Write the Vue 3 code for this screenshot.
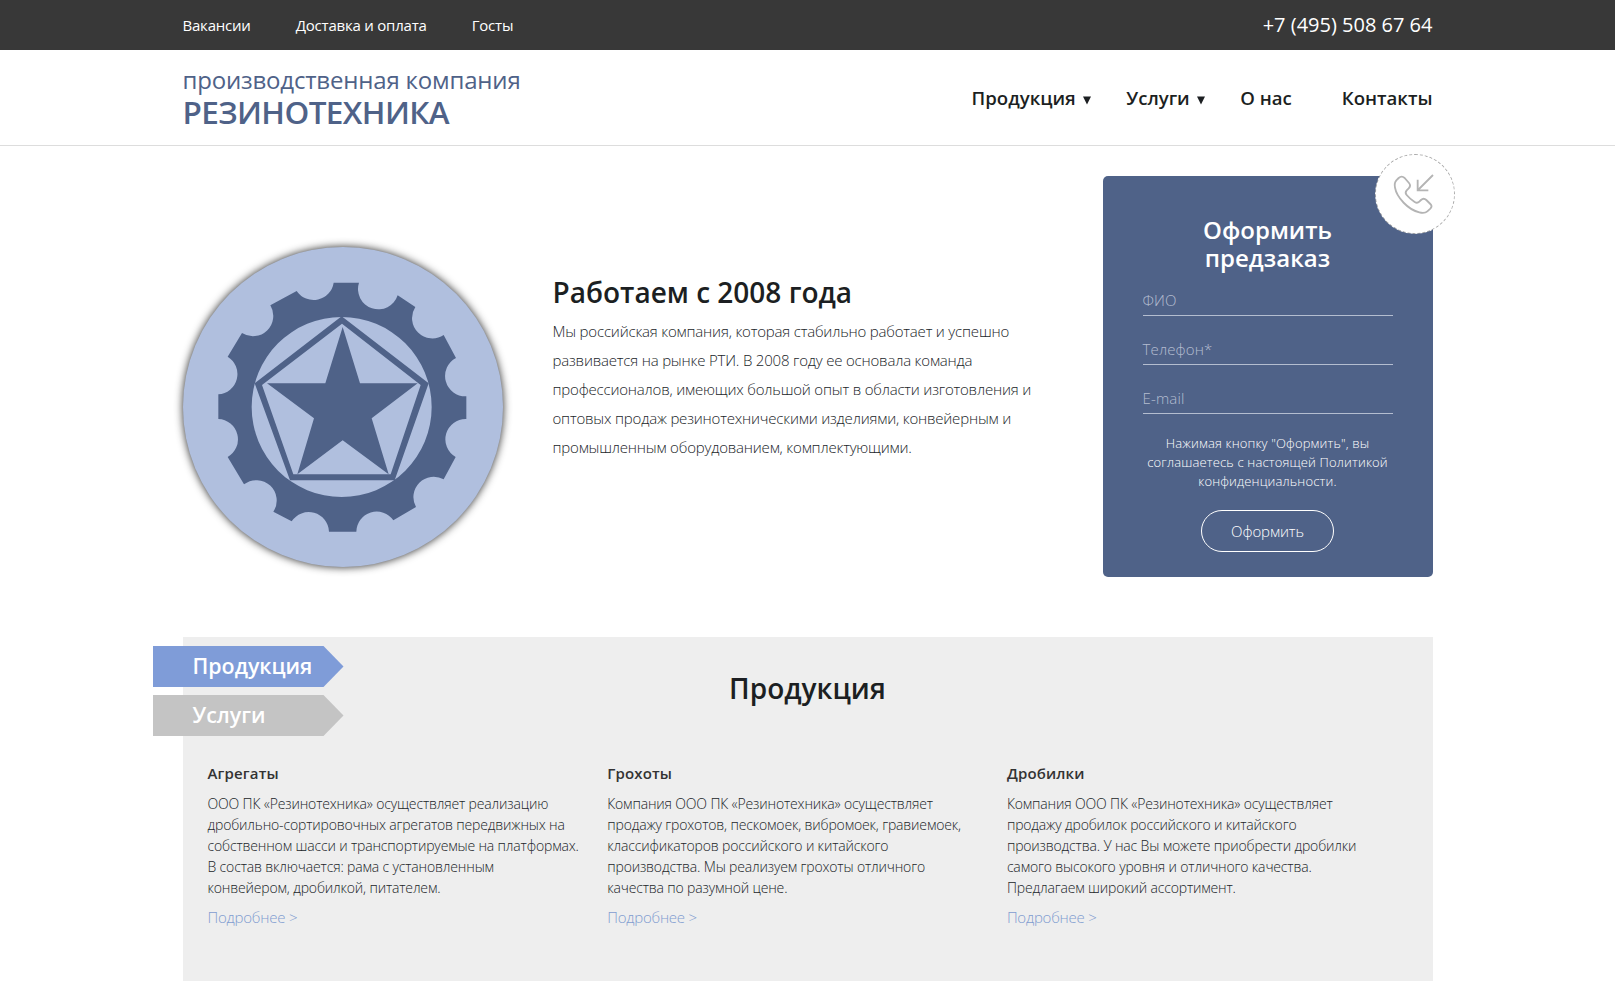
<script setup>
const topLinks = ['Вакансии', 'Доставка и оплата', 'Госты']
const about = [
  'Мы российская компания, которая стабильно работает и успешно',
  'развивается на рынке РТИ. В 2008 году ее основала команда',
  'профессионалов, имеющих большой опыт в области изготовления и',
  'оптовых продаж резинотехническими изделиями, конвейерным и',
  'промышленным оборудованием, комплектующими.',
]
const fields = ['ФИО', 'Телефон*', 'E-mail']
const products = [
  {
    title: 'Агрегаты',
    lines: [
      'ООО ПК «Резинотехника» осуществляет реализацию',
      'дробильно-сортировочных агрегатов передвижных на',
      'собственном шасси и транспортируемые на платформах.',
      'В состав включается: рама с установленным',
      'конвейером, дробилкой, питателем.',
    ],
  },
  {
    title: 'Грохоты',
    lines: [
      'Компания ООО ПК «Резинотехника» осуществляет',
      'продажу грохотов, пескомоек, вибромоек, гравиемоек,',
      'классификаторов российского и китайского',
      'производства. Мы реализуем грохоты отличного',
      'качества по разумной цене.',
    ],
  },
  {
    title: 'Дробилки',
    lines: [
      'Компания ООО ПК «Резинотехника» осуществляет',
      'продажу дробилок российского и китайского',
      'производства. У нас Вы можете приобрести дробилки',
      'самого высокого уровня и отличного качества.',
      'Предлагаем широкий ассортимент.',
    ],
  },
]
</script>

<template>
  <div class="page">
    <div class="topbar">
      <div class="container topbar-row">
        <nav class="top-links">
          <a v-for="l in topLinks" :key="l">{{ l }}</a>
        </nav>
        <a class="phone">+7 (495) 508 67 64</a>
      </div>
    </div>

    <header class="header">
      <div class="container header-row">
        <div class="logo">
          <div class="logo-sub">производственная компания</div>
          <div class="logo-name">РЕЗИНОТЕХНИКА</div>
        </div>
        <nav class="menu">
          <a class="drop">Продукция<svg width="8" height="9" viewBox="0 0 8 9"><path d="M0 0.5H8L4 8.5Z" /></svg></a>
          <a class="drop">Услуги<svg width="8" height="9" viewBox="0 0 8 9"><path d="M0 0.5H8L4 8.5Z" /></svg></a>
          <a class="about-link">О нас</a>
          <a>Контакты</a>
        </nav>
      </div>
    </header>

    <section class="container hero">
      <div class="emblem">
        <svg viewBox="39 50 960 960">
          <path
            fill="#4f6288"
            fill-rule="evenodd"
            d="M491 157H567A61 61 0 0 0 683 195L736 230A61 61 0 0 0 821 314L858 383A61 61 0 0 0 889 498V566A61 61 0 0 0 857 680L821 747A61 61 0 0 0 738 830L670 870A61 61 0 0 0 559 904H477A61 61 0 0 0 365 873L310 844A61 61 0 0 0 222 762L173 680A61 61 0 0 0 145 566V492A61 61 0 0 0 173 379L216 308A61 61 0 0 0 301 225L380 182A61 61 0 0 0 491 157ZM515 260A270 270 0 0 0 515 800A270 270 0 0 0 515 260Z"
          />
          <path
            fill="#4f6288"
            fill-rule="evenodd"
            d="M515 258L776 459L674 750H360L254 459ZM516 280L276 464L370 732H662L752 464Z"
          />
          <path
            fill="#4f6288"
            d="M518 290L570 459H743L605 564L656 732L518 630L382 732L432 564L291 459H466Z"
          />
        </svg>
      </div>

      <div class="about">
        <h1>Работаем с 2008 года</h1>
        <p><span v-for="l in about" :key="l">{{ l }}</span></p>
      </div>

      <form class="order" @submit.prevent>
        <h2>Оформить<br />предзаказ</h2>
        <div v-for="f in fields" :key="f" class="field">{{ f }}</div>
        <p class="policy">Нажимая кнопку "Оформить", вы<br />соглашаетесь с настоящей Политикой<br />конфиденциальности.</p>
        <button class="submit">Оформить</button>
        <span class="call">
          <svg viewBox="855 42 240 240" fill="none" stroke="#b4b4b4" stroke-width="5.5" stroke-linejoin="round">
            <path d="M926 114Q935 106 944 114L957 129Q964 137 956 145L950 151Q944 158 950 165Q960 177 974 186Q982 191 988 185L993 180Q1001 172 1009 180L1021 192Q1028 199 1021 206L1012 214Q1004 221 988 217C955 210 920 172 915 143Q912 129 919 121Z" />
            <path stroke-linejoin="miter" d="M1029 105L984 150M983 119V151H1015" />
          </svg>
        </span>
      </form>
    </section>

    <section class="container catalog">
      <div class="tabs">
        <div class="tab active">Продукция</div>
        <div class="tab">Услуги</div>
      </div>
      <h2>Продукция</h2>
      <div class="products">
        <article v-for="p in products" :key="p.title">
          <h3>{{ p.title }}</h3>
          <p><span v-for="l in p.lines" :key="l">{{ l }}</span></p>
          <a>Подробнее &gt;</a>
        </article>
      </div>
    </section>
  </div>
</template>

<style>
body {
  background: #fff;
  overflow: hidden;
}
</style>

<style scoped>
.page {
  height: 981px;
  overflow: hidden;
  font-family: 'Open Sans', 'Noto Sans', sans-serif;
  font-weight: 300;
  color: #212529;
}
h1, h2, h3, p { margin: 0; }
p span { display: block; white-space: nowrap; }
.container {
  width: 1250px;
  margin: 0 auto;
  position: relative;
}
.topbar {
  height: 50px;
  background: #383838;
  color: #fff;
  font-weight: 400;
}
.topbar-row {
  height: 48px;
  display: flex;
  justify-content: space-between;
  align-items: center;
}
.top-links { display: flex; gap: 45px; font-size: 15px; letter-spacing: -0.21px; padding-top: 2px; }
.phone { font-size: 20px; }
.header { height: 95px; border-bottom: 1px solid #ddd; }
.header-row {
  height: 95px;
  display: flex;
  justify-content: space-between;
}
.logo { color: #4f6288; padding-top: 13px; }
.logo-sub { font-size: 24px; line-height: 34px; font-weight: 400; letter-spacing: -0.18px; white-space: nowrap; }
.logo-name { font-size: 31.5px; line-height: 30px; font-weight: 600; letter-spacing: -0.6px; }
.menu {
  display: flex;
  align-items: center;
  font-size: 18.6px;
  font-weight: 600;
  color: #1c1f22;
}
.menu a { white-space: nowrap; }
.menu svg { margin-left: 7.5px; fill: #1c1f22; }
.drop { margin-right: 35px; }
.about-link { margin-right: 50px; }
.hero {
  height: 491px;
  display: flex;
  align-items: flex-start;
}
.emblem {
  flex: none;
  width: 320px;
  height: 320px;
  margin-top: 100.6px;
  border-radius: 50%;
  background: #b0bfde;
  box-shadow: 0 0 8px rgba(0, 0, 0, 0.85);
}
.emblem svg { display: block; width: 320px; height: 320px; }
.about { margin-left: 50px; padding-top: 128px; width: 550px; flex: none; }
.about h1 { font-size: 28px; line-height: 36px; font-weight: 600; color: #1c1f22; }
.about p { margin-top: 7px; font-size: 15px; line-height: 29px; letter-spacing: -0.19px; }
.order {
  position: relative;
  box-sizing: border-box;
  width: 330px;
  height: 401px;
  margin-top: 30px;
  padding: 40px 40px 0;
  border-radius: 5px;
  background: #4f6288;
  color: #fff;
  text-align: center;
}
.order h2 { font-size: 24px; line-height: 28px; font-weight: 600; }
.call {
  position: absolute;
  top: -22px;
  right: -22px;
  box-sizing: border-box;
  width: 80px;
  height: 80px;
  border: 1px dashed #aaa;
  border-radius: 50%;
  background: #fff;
}
.call svg { display: block; width: 80px; height: 80px; margin: -1px; }
.field {
  height: 36px;
  margin-top: 12px;
  border-bottom: 1px solid #b4bdd0;
  font-size: 15px;
  line-height: 42px;
  letter-spacing: 0.15px;
  text-align: left;
  color: #b4bdd0;
}
.field:first-of-type { margin-top: 7px; }
.policy {
  margin: 20px -10px 0;
  font-size: 13px;
  line-height: 19px;
  letter-spacing: 0.15px;
}
.submit {
  width: 133px;
  height: 42px;
  margin-top: 19px;
  padding: 0;
  border: 1px solid #fff;
  border-radius: 21px;
  background: none;
  color: #fff;
  font: inherit;
  font-size: 15px;
  letter-spacing: -0.1px;
}
.catalog { height: 400px; background: #eee; }
.tabs {
  position: absolute;
  left: -30px;
  top: 9px;
  display: flex;
  flex-direction: column;
  gap: 8px;
}
.tab {
  box-sizing: border-box;
  width: 191px;
  height: 41px;
  padding-left: 40px;
  font-size: 21.4px;
  line-height: 40px;
  font-weight: 600;
  color: #fff;
  background: #c4c4c4;
  clip-path: polygon(0 0, 171px 0, 100% 50%, 171px 100%, 0 100%);
}
.tab.active { background: #7f9cd8; }
.catalog h2 {
  padding-top: 32px;
  font-size: 28px;
  line-height: 38px;
  font-weight: 600;
  text-align: center;
  color: #1c1f22;
}
.products {
  display: grid;
  grid-template-columns: repeat(3, 399.7px);
  margin: 53px 0 0 25px;
}
.products h3 { font-size: 15px; line-height: 26px; font-weight: 600; letter-spacing: 0.15px; color: #333; }
.products p { margin-top: 7px; font-size: 14px; line-height: 21px; letter-spacing: -0.155px; }
.products a { display: block; margin-top: 7px; font-size: 15px; line-height: 25px; letter-spacing: -0.22px; color: #7f9cd0; }
</style>
